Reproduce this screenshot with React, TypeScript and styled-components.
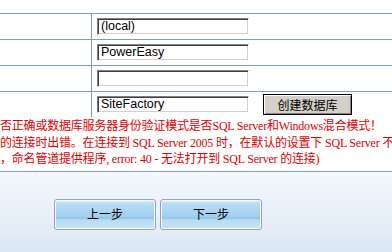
import React from 'react';
import styled, { createGlobalStyle } from 'styled-components';

const GlobalStyle = createGlobalStyle`
  html, body {
    margin: 0;
    padding: 0;
    background: #ffffff;
  }
  body {
    font-family: "Liberation Sans", "Noto Sans CJK SC", sans-serif;
    font-size: 12px;
  }
`;

const Page = styled.div`
  width: 392px;
  height: 252px;
  overflow: hidden;
  display: flex;
  flex-direction: column;
`;

const FormTable = styled.div`
  background: #ffffff;
  padding-top: 13px;
`;

const Row = styled.div`
  display: grid;
  grid-template-columns: 92px 1fr;
  height: 26px;
  border-top: 1px solid #7f9db9;
  box-sizing: border-box;
`;

const LabelCell = styled.div`
  border-right: 1px solid #7f9db9;
`;

const FieldCell = styled.div`
  display: flex;
  align-items: center;
  gap: 14px;
  padding-left: 5px;
`;

const TextInput = styled.div`
  width: 152px;
  height: 17px;
  box-sizing: border-box;
  border-top: 1px solid #808080;
  border-left: 1px solid #808080;
  border-right: 1px solid #ffffff;
  border-bottom: 1px solid #ffffff;
  box-shadow: inset 1px 1px 0 #404040, inset -1px -1px 0 #d4d0c8;
  background: #ffffff;
  padding: 0 3px;
  font-family: "Liberation Sans", Arial, sans-serif;
  font-size: 12.5px;
  line-height: 15px;
  color: #000000;
  white-space: nowrap;
  overflow: hidden;
`;

const ClassicButton = styled.div`
  width: 89px;
  height: 21px;
  box-sizing: border-box;
  border: 1px solid #000000;
  background: #d4d0c8;
  box-shadow: inset 1px 1px 0 #ffffff, inset -1px -1px 0 #808080;
  display: flex;
  align-items: center;
  justify-content: center;
  font-family: "Noto Sans CJK SC", sans-serif;
  font-size: 12px;
  color: #000000;
`;

const ErrorRow = styled.div`
  height: 55px;
  box-sizing: border-box;
  border-bottom: 1px solid #7f9db9;
  padding-top: 1px;
  font-family: "Liberation Serif", "Noto Sans CJK SC", serif;
  font-size: 12px;
  letter-spacing: -0.2px;
  line-height: 16.5px;
  color: #e00000;
  white-space: nowrap;
  overflow: hidden;
`;

const ErrorLine = styled.div``;

const Footer = styled.div`
  flex: 1;
  background: linear-gradient(to bottom, #f4f8fc 0%, #e9f0f9 50%, #dce7f4 100%);
  padding: 27px 0 0 54px;
  display: flex;
  gap: 4px;
  align-items: flex-start;
`;

const StepButton = styled.div`
  width: 102px;
  height: 31px;
  box-sizing: border-box;
  border: 1px solid #99a6b2;
  border-radius: 3px;
  box-shadow: inset 0 0 0 1px #f4faff;
  background: linear-gradient(
    to bottom,
    #eef7fd 0%,
    #b9def5 12%,
    #a7d3f0 45%,
    #a2cfee 58%,
    #8fc1e3 62%,
    #b4dbf3 68%,
    #c8e5f8 100%
  );
  display: flex;
  align-items: center;
  justify-content: center;
  padding-bottom: 3px;
  font-family: "Noto Sans CJK SC", sans-serif;
  font-size: 12px;
  color: #000000;
`;

const fields = ['(local)', 'PowerEasy', ''];

export default function App() {
  return (
    <Page>
      <GlobalStyle />
      <FormTable>
        {fields.map((value, i) => (
          <Row key={i}>
            <LabelCell />
            <FieldCell>
              <TextInput>{value}</TextInput>
            </FieldCell>
          </Row>
        ))}
        <Row>
          <LabelCell />
          <FieldCell>
            <TextInput>SiteFactory</TextInput>
            <ClassicButton>创建数据库</ClassicButton>
          </FieldCell>
        </Row>
        <ErrorRow>
          <ErrorLine>否正确或数据库服务器身份验证模式是否SQL Server和Windows混合模式！</ErrorLine>
          <ErrorLine>
            的连接时出错。在连接到 SQL Server 2005 时，在默认的设置下 SQL Server 不允许进行远程连接
          </ErrorLine>
          <ErrorLine>，命名管道提供程序, error: 40 - 无法打开到 SQL Server 的连接)</ErrorLine>
        </ErrorRow>
      </FormTable>
      <Footer>
        <StepButton>上一步</StepButton>
        <StepButton>下一步</StepButton>
      </Footer>
    </Page>
  );
}
